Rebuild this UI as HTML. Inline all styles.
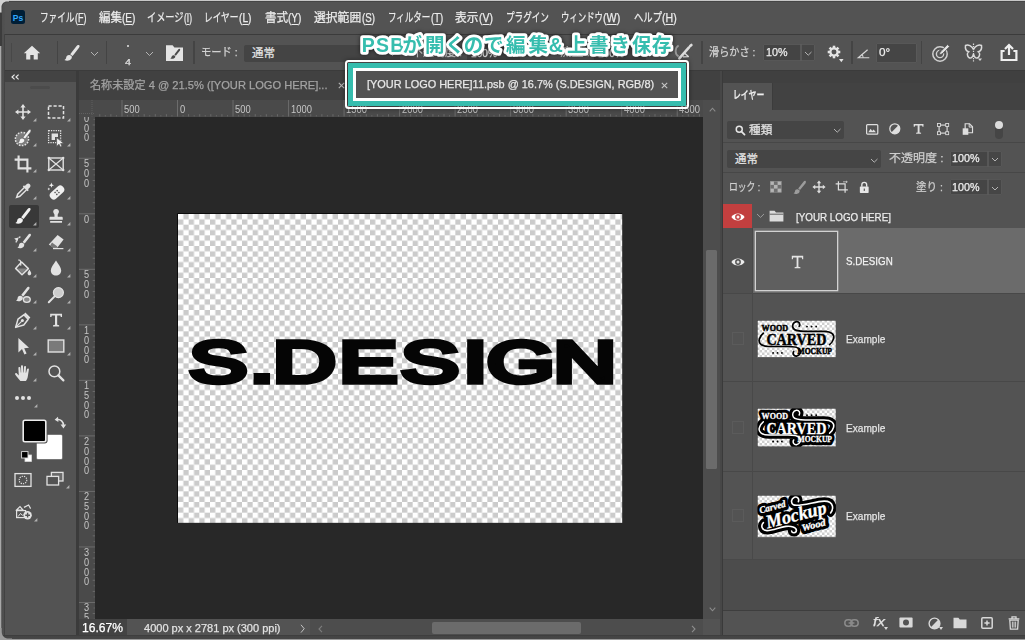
<!DOCTYPE html>
<html lang="ja"><head><meta charset="utf-8"><title>Photoshop</title><style>
html,body{margin:0;padding:0;background:#535353;}
body{width:1025px;height:640px;overflow:hidden;position:relative;font-family:"Liberation Sans","Noto Sans CJK JP",sans-serif;}
#app{position:absolute;left:0;top:0;width:1025px;height:640px;overflow:hidden;background:#535353;}
#app>div,#app>svg,#app>span{position:absolute;display:block;}
svg{overflow:visible;}
.t{white-space:nowrap;transform-origin:0 50%;letter-spacing:0;-webkit-text-stroke:0.25px currentColor;}
.t u{text-decoration-thickness:0.8px;text-underline-offset:1.5px;}
.rl{font-size:10.2px;line-height:10px;color:#c6c6c6;white-space:nowrap;transform-origin:0 0;transform:scaleX(0.92);}
.rl.v{writing-mode:vertical-rl;text-orientation:upright;width:9px;line-height:9px;letter-spacing:-1.25px;transform-origin:50% 0;transform:scaleX(0.9);}
</style></head><body><div id="app">
<span class="t" id="t4" style="left:39.50px;top:8.80px;font-size:12px;line-height:18px;color:#ececec;font-weight:400;transform:scaleX(0.7175);">ファイル</span>
<span class="t" id="t5" style="left:74.55px;top:8.80px;font-size:12px;line-height:18px;color:#ececec;font-weight:400;transform:scaleX(0.7462);">(<u>F</u>)</span>
<span class="t" id="t6" style="left:98.50px;top:8.80px;font-size:12px;line-height:18px;color:#ececec;font-weight:400;transform:scaleX(0.9556);">編集</span>
<span class="t" id="t7" style="left:122.05px;top:8.80px;font-size:12px;line-height:18px;color:#ececec;font-weight:400;transform:scaleX(0.8398);">(<u>E</u>)</span>
<span class="t" id="t8" style="left:147.00px;top:8.80px;font-size:12px;line-height:18px;color:#ececec;font-weight:400;transform:scaleX(0.7631);">イメージ</span>
<span class="t" id="t9" style="left:184.05px;top:8.80px;font-size:12px;line-height:18px;color:#ececec;font-weight:400;transform:scaleX(0.7008);">(<u>I</u>)</span>
<span class="t" id="t10" style="left:204.00px;top:8.80px;font-size:12px;line-height:18px;color:#ececec;font-weight:400;transform:scaleX(0.7231);">レイヤー</span>
<span class="t" id="t11" style="left:239.05px;top:8.80px;font-size:12px;line-height:18px;color:#ececec;font-weight:400;transform:scaleX(0.8477);">(<u>L</u>)</span>
<span class="t" id="t12" style="left:264.50px;top:8.80px;font-size:12px;line-height:18px;color:#ececec;font-weight:400;transform:scaleX(0.9660);">書式</span>
<span class="t" id="t13" style="left:288.30px;top:8.80px;font-size:12px;line-height:18px;color:#ececec;font-weight:400;transform:scaleX(0.8398);">(<u>Y</u>)</span>
<span class="t" id="t14" style="left:314.25px;top:8.80px;font-size:12px;line-height:18px;color:#ececec;font-weight:400;transform:scaleX(0.9830);">選択範囲</span>
<span class="t" id="t15" style="left:362.05px;top:8.80px;font-size:12px;line-height:18px;color:#ececec;font-weight:400;transform:scaleX(0.8086);">(<u>S</u>)</span>
<span class="t" id="t16" style="left:388.00px;top:8.80px;font-size:12px;line-height:18px;color:#ececec;font-weight:400;transform:scaleX(0.7061);">フィルター</span>
<span class="t" id="t17" style="left:430.80px;top:8.80px;font-size:12px;line-height:18px;color:#ececec;font-weight:400;transform:scaleX(0.7951);">(<u>T</u>)</span>
<span class="t" id="t18" style="left:455.00px;top:8.80px;font-size:12px;line-height:18px;color:#ececec;font-weight:400;transform:scaleX(0.9764);">表示</span>
<span class="t" id="t19" style="left:479.05px;top:8.80px;font-size:12px;line-height:18px;color:#ececec;font-weight:400;transform:scaleX(0.8710);">(<u>V</u>)</span>
<span class="t" id="t20" style="left:505.50px;top:8.80px;font-size:12px;line-height:18px;color:#ececec;font-weight:400;transform:scaleX(0.7156);">プラグイン</span>
<span class="t" id="t21" style="left:560.75px;top:8.80px;font-size:12px;line-height:18px;color:#ececec;font-weight:400;transform:scaleX(0.6990);">ウィンドウ</span>
<span class="t" id="t22" style="left:603.30px;top:8.80px;font-size:12px;line-height:18px;color:#ececec;font-weight:400;transform:scaleX(0.8899);">(<u>W</u>)</span>
<span class="t" id="t23" style="left:633.75px;top:8.80px;font-size:12px;line-height:18px;color:#ececec;font-weight:400;transform:scaleX(0.7761);">ヘルプ</span>
<span class="t" id="t24" style="left:662.30px;top:8.80px;font-size:12px;line-height:18px;color:#ececec;font-weight:400;transform:scaleX(0.8817);">(<u>H</u>)</span>
<svg style="left:10.50px;top:10.00px;" width="14" height="14" viewBox="0 0 14 14"><rect x="0" y="0" width="14" height="14" rx="2.5" fill="#001e36"/><text x="7" y="10.6" font-size="8.5" font-weight="700" fill="#31a8ff" text-anchor="middle" font-family='"Liberation Sans",sans-serif'>Ps</text></svg>
<div style="left:4.50px;top:33.50px;width:1020.50px;height:1.50px;background:#3b3b3b;"></div>
<div style="left:4.50px;top:69.50px;width:1020.50px;height:1.50px;background:#3b3b3b;"></div>
<div style="left:10.50px;top:43.00px;width:1.00px;height:19.00px;background:#484848;"></div>
<div style="left:56.90px;top:41.00px;width:1.20px;height:23.00px;background:#444444;"></div>
<div style="left:105.90px;top:41.00px;width:1.20px;height:23.00px;background:#444444;"></div>
<div style="left:193.40px;top:41.00px;width:1.20px;height:23.00px;background:#444444;"></div>
<div style="left:701.40px;top:41.00px;width:1.20px;height:23.00px;background:#444444;"></div>
<div style="left:851.40px;top:41.00px;width:1.20px;height:23.00px;background:#444444;"></div>
<div style="left:920.70px;top:41.00px;width:1.20px;height:23.00px;background:#444444;"></div>
<svg style="left:23.00px;top:45.00px;" width="18" height="16" viewBox="0 0 18 16"><path d="M9 0.8 L0.8 8.2 L3.2 8.2 L3.2 14.6 L7.3 14.6 L7.3 10 L10.7 10 L10.7 14.6 L14.8 14.6 L14.8 8.2 L17.2 8.2 Z" fill="#e4e4e4"/></svg>
<svg style="left:63.00px;top:44.00px;" width="18" height="18" viewBox="0 0 18 18"><path d="M16.2 1.2 C15.2 0.6 14.2 1.2 13.4 2.2 L7.2 10.2 L9.6 12 L15.8 4 C16.6 3 17 1.8 16.2 1.2 Z" fill="#e4e4e4"/><path d="M6.4 11 C4.6 10.8 3.4 12 3.2 13.6 C3.1 14.8 2.4 15.6 1.4 16 C3.6 17.2 7 16.8 8.4 14.8 C9.2 13.6 8.8 12.2 8.4 11.8 Z" fill="#e4e4e4"/></svg>
<svg style="left:89.50px;top:50.75px;" width="9" height="5.5" viewBox="0 0 9 5.5"><path d="M1 1 L4.50 4.50 L8.00 1" fill="none" stroke="#b4b4b4" stroke-width="1.0"/></svg>
<div style="left:127.00px;top:45.20px;width:2.00px;height:2.00px;background:#e4e4e4;border-radius:1px"></div>
<span class="t" id="t25" style="left:125.00px;top:54.50px;font-size:9.5px;line-height:14px;color:#e0e0e0;font-weight:400;transform:scaleX(1.1327);">4</span>
<svg style="left:144.50px;top:50.75px;" width="9" height="5.5" viewBox="0 0 9 5.5"><path d="M1 1 L4.50 4.50 L8.00 1" fill="none" stroke="#b4b4b4" stroke-width="1.0"/></svg>
<svg style="left:166.00px;top:43.50px;" width="17" height="18" viewBox="0 0 17 18"><path d="M0 1.2 L6.6 1.2 L8.4 3.4 L17 3.4 L17 17 L0 17 Z" fill="#e4e4e4"/><path d="M13.8 5 C13.2 4.6 12.6 5 12.2 5.6 L8.4 10.6 L9.8 11.8 L13.8 6.8 C14.2 6.2 14.4 5.4 13.8 5 Z M7.8 11.2 C6.6 11 5.8 11.8 5.6 12.8 C5.5 13.6 5 14.2 4.2 14.4 C5.8 15.2 8 15 9 13.6 C9.5 12.8 9.2 12 9 11.8 Z" fill="#4a4a4a"/></svg>
<span class="t" id="t26" style="left:201.00px;top:44.00px;font-size:11.5px;line-height:17px;color:#d2d2d2;font-weight:400;transform:scaleX(0.8926);">モード :</span>
<div style="left:243.75px;top:44.50px;width:156.25px;height:17.50px;background:#444444;border-radius:2px"></div>
<span class="t" id="t27" style="left:252.00px;top:44.50px;font-size:11.5px;line-height:17px;color:#e0e0e0;font-weight:400;transform:scaleX(1.0000);">通常</span>
<svg style="left:387.50px;top:50.75px;" width="9" height="5.5" viewBox="0 0 9 5.5"><path d="M1 1 L4.50 4.50 L8.00 1" fill="none" stroke="#b4b4b4" stroke-width="1.0"/></svg>
<span class="t" id="t28" style="left:412.00px;top:44.00px;font-size:11.5px;line-height:17px;color:#cfcfcf;font-weight:400;transform:scaleX(0.9544);">不透明度 :</span>
<div style="left:467.00px;top:44.50px;width:53.00px;height:17.50px;background:#444444;border-radius:2px"></div>
<span class="t" id="t29" style="left:471.00px;top:44.50px;font-size:11.5px;line-height:17px;color:#e0e0e0;font-weight:400;transform:scaleX(0.8837);">100%</span>
<span class="t" id="t30" style="left:560.00px;top:44.00px;font-size:11.5px;line-height:17px;color:#cfcfcf;font-weight:400;transform:scaleX(1.0207);">流量 :</span>
<div style="left:594.00px;top:44.50px;width:52.00px;height:17.50px;background:#444444;border-radius:2px"></div>
<span class="t" id="t31" style="left:598.00px;top:44.50px;font-size:11.5px;line-height:17px;color:#e0e0e0;font-weight:400;transform:scaleX(0.8837);">100%</span>
<svg style="left:672.00px;top:44.00px;" width="21" height="16" viewBox="0 0 21 16"><path d="M6.6 1.6 C2.6 4 2.6 10 6.6 12.6" fill="none" stroke="#9a9a9a" stroke-width="1.8"/><path d="M7.4 14.4 L17 3.4 M18.2 2 L19.4 1" fill="none" stroke="#dcdcdc" stroke-width="2.6" stroke-linecap="round"/><path d="M12.4 9 L16.4 12.6 L11 12.8" fill="none" stroke="#dcdcdc" stroke-width="1.3" stroke-linejoin="round"/></svg>
<span class="t" id="t32" style="left:708.75px;top:43.50px;font-size:11.5px;line-height:17px;color:#d2d2d2;font-weight:400;transform:scaleX(0.8828);">滑らかさ :</span>
<div style="left:762.50px;top:43.75px;width:38.00px;height:17.00px;background:#444444;border-radius:2px 0 0 2px;box-shadow:inset 0 0 0 0.8px #5e5e5e"></div>
<div style="left:800.50px;top:43.75px;width:14.50px;height:17.00px;background:#464646;border-radius:0 2px 2px 0;box-shadow:inset 0 0 0 0.8px #5e5e5e"></div>
<span class="t" id="t33" style="left:765.50px;top:43.80px;font-size:11.5px;line-height:17px;color:#eeeeee;font-weight:400;transform:scaleX(0.9335);">10%</span>
<svg style="left:803.75px;top:50.90px;" width="8.5" height="5.2" viewBox="0 0 8.5 5.2"><path d="M1 1 L4.25 4.20 L7.50 1" fill="none" stroke="#b4b4b4" stroke-width="1.0"/></svg>
<svg style="left:826.75px;top:45.00px;" width="14" height="14" viewBox="0 0 16 16"><g transform="translate(8,8)"><rect x="-1.45" y="-7.2" width="2.9" height="3.4" transform="rotate(0)" fill="#e4e4e4"/><rect x="-1.45" y="-7.2" width="2.9" height="3.4" transform="rotate(45)" fill="#e4e4e4"/><rect x="-1.45" y="-7.2" width="2.9" height="3.4" transform="rotate(90)" fill="#e4e4e4"/><rect x="-1.45" y="-7.2" width="2.9" height="3.4" transform="rotate(135)" fill="#e4e4e4"/><rect x="-1.45" y="-7.2" width="2.9" height="3.4" transform="rotate(180)" fill="#e4e4e4"/><rect x="-1.45" y="-7.2" width="2.9" height="3.4" transform="rotate(225)" fill="#e4e4e4"/><rect x="-1.45" y="-7.2" width="2.9" height="3.4" transform="rotate(270)" fill="#e4e4e4"/><rect x="-1.45" y="-7.2" width="2.9" height="3.4" transform="rotate(315)" fill="#e4e4e4"/><circle r="4.1" fill="none" stroke="#e4e4e4" stroke-width="2.5"/></g></svg>
<svg style="left:838.80px;top:59.20px;" width="4.6" height="3.2" viewBox="0 0 4.6 3.2"><path d="M0 0 L4.6 0 L2.3 3.2 Z" fill="#e4e4e4"/></svg>
<svg style="left:857.00px;top:47.50px;" width="13.6" height="11" viewBox="0 0 16 13"><path d="M14.5 11.5 L1.5 11.5 L12.5 2" fill="none" stroke="#d6d6d6" stroke-width="1.4"/><path d="M7.2 11.5 C7.2 9.6 6.6 8.4 5.6 7.6" fill="none" stroke="#d6d6d6" stroke-width="1.2"/></svg>
<div style="left:875.50px;top:42.50px;width:41.00px;height:20.00px;background:#454545;border-radius:2px;box-shadow:inset 0 0 0 0.8px #5e5e5e"></div>
<span class="t" id="t34" style="left:878.75px;top:43.80px;font-size:11.5px;line-height:17px;color:#eeeeee;font-weight:400;transform:scaleX(1.0227);">0°</span>
<svg style="left:930.50px;top:42.00px;" width="21" height="21" viewBox="0 0 21 21"><circle cx="9" cy="12" r="7.2" fill="none" stroke="#d0d0d0" stroke-width="1.5"/><circle cx="9" cy="12" r="3.6" fill="none" stroke="#d0d0d0" stroke-width="1.4"/><path d="M9 12 L11 9" stroke="#535353" stroke-width="5"/><path d="M8.2 12.8 L9.2 10.2 L16.4 2.6 L18.6 4.6 L11 12 Z" fill="#e4e4e4" stroke="#535353" stroke-width="0.8"/></svg>
<svg style="left:963.50px;top:43.00px;" width="19" height="19" viewBox="0 0 19 19"><path d="M9.5 6.5 C8 3 4 1 1.5 2.5 C1 5.5 2.5 8 4.5 8.8 C2.8 9.8 3 13.5 5.2 14.8 C7.4 15.8 9 13.5 9.5 11 M9.5 6.5 C11 3 15 1 17.5 2.5 C18 5.5 16.5 8 14.5 8.8 C16.2 9.8 16 13.5 13.8 14.8 C11.6 15.8 10 13.5 9.5 11" fill="none" stroke="#dadada" stroke-width="1.5"/><path d="M9.5 0.5 L9.5 18.5" stroke="#dadada" stroke-width="1.2" stroke-dasharray="1.4 1"/><path d="M14 15.6 L18 15.6 L16 18 Z" fill="#dadada"/></svg>
<svg style="left:1000.00px;top:42.50px;" width="18" height="19" viewBox="0 0 18 19"><path d="M4.6 8 L1.6 8 L1.6 17 L16.4 17 L16.4 8 L13.4 8" fill="none" stroke="#f0f0f0" stroke-width="2.2"/><path d="M9 12 L9 2.6 M5 6 L9 2 L13 6" fill="none" stroke="#f0f0f0" stroke-width="2.2"/></svg>
<div style="left:4.50px;top:70.50px;width:71.50px;height:11.00px;background:#434343;"></div>
<div style="left:76.00px;top:70.50px;width:3.00px;height:569.50px;background:#3b3b3b;"></div>
<svg style="left:10.50px;top:73.50px;" width="9" height="6" viewBox="0 0 9 6"><path d="M3.6 0.6 L1 3 L3.6 5.4 M7.6 0.6 L5 3 L7.6 5.4" fill="none" stroke="#e8e8e8" stroke-width="1.2"/></svg>
<div style="left:30.00px;top:85.50px;width:20.00px;height:3.50px;background:#4b4b4b;border-radius:1.5px"></div>
<div style="left:9.00px;top:205.00px;width:30.00px;height:23.00px;background:#383838;border-radius:2px"></div>
<svg style="left:13.50px;top:103.00px;" width="18.0" height="18.0" viewBox="0 0 18 18"><path d="M9 1 L11.6 4.4 L9.8 4.4 L9.8 8.2 L13.6 8.2 L13.6 6.4 L17 9 L13.6 11.6 L13.6 9.8 L9.8 9.8 L9.8 13.6 L11.6 13.6 L9 17 L6.4 13.6 L8.2 13.6 L8.2 9.8 L4.4 9.8 L4.4 11.6 L1 9 L4.4 6.4 L4.4 8.2 L8.2 8.2 L8.2 4.4 L6.4 4.4 Z" fill="#e2e2e2"/></svg><svg style="left:33.00px;top:117.50px;" width="3.4" height="3.4" viewBox="0 0 3.4 3.4"><path d="M3.4 0 L3.4 3.4 L0 3.4 Z" fill="#b0b0b0"/></svg>
<svg style="left:47.00px;top:103.00px;" width="18.0" height="18.0" viewBox="0 0 18 18"><rect x="1.5" y="3" width="15" height="12" fill="none" stroke="#e2e2e2" stroke-width="1.5" stroke-dasharray="3.2 1.8"/></svg><svg style="left:66.50px;top:117.50px;" width="3.4" height="3.4" viewBox="0 0 3.4 3.4"><path d="M3.4 0 L3.4 3.4 L0 3.4 Z" fill="#b0b0b0"/></svg>
<svg style="left:13.50px;top:128.50px;" width="18.0" height="18.0" viewBox="0 0 18 18"><circle cx="8" cy="10" r="6.6" fill="#7c7c7c" stroke="#e2e2e2" stroke-width="1.5" stroke-dasharray="1.7 1.25"/><path d="M16.6 0.8 C15.7 0.2 14.8 0.8 14.1 1.7 L9 8.4 L11.1 10 L16.2 3.4 C16.9 2.5 17.3 1.3 16.6 0.8 Z M8.3 9.2 C6.6 9 5.5 10.1 5.4 11.6 C5.3 12.7 4.6 13.5 3.7 13.9 C5.8 15 8.9 14.7 10.2 12.8 C11 11.7 10.6 10.4 10.2 10 Z" fill="#f2f2f2" stroke="#535353" stroke-width="0.5"/></svg><svg style="left:33.00px;top:143.00px;" width="3.4" height="3.4" viewBox="0 0 3.4 3.4"><path d="M3.4 0 L3.4 3.4 L0 3.4 Z" fill="#b0b0b0"/></svg>
<svg style="left:47.00px;top:128.50px;" width="18.0" height="18.0" viewBox="0 0 18 18"><rect x="1.6" y="1.6" width="12" height="12" fill="none" stroke="#e2e2e2" stroke-width="1.3" stroke-dasharray="1.3 1.05"/><path d="M4.6 4.6 L11 4.6 L11 8 L8 8 L8 11 L4.6 11 Z" fill="#e2e2e2"/><path d="M9.6 8.6 L9.6 17.4 L12 15.2 L13.4 18 L15 17.2 L13.6 14.5 L16.6 14.2 Z" fill="#f2f2f2" stroke="#535353" stroke-width="0.7"/></svg><svg style="left:66.50px;top:143.00px;" width="3.4" height="3.4" viewBox="0 0 3.4 3.4"><path d="M3.4 0 L3.4 3.4 L0 3.4 Z" fill="#b0b0b0"/></svg>
<svg style="left:13.50px;top:154.60px;" width="18.0" height="18.0" viewBox="0 0 18 18"><path d="M4.6 0.6 L4.6 13.4 L17.4 13.4 M0.6 4.6 L13.4 4.6 L13.4 17.4" fill="none" stroke="#e2e2e2" stroke-width="2.1"/></svg><svg style="left:33.00px;top:169.10px;" width="3.4" height="3.4" viewBox="0 0 3.4 3.4"><path d="M3.4 0 L3.4 3.4 L0 3.4 Z" fill="#b0b0b0"/></svg>
<svg style="left:47.00px;top:154.60px;" width="18.0" height="18.0" viewBox="0 0 18 18"><rect x="1.8" y="3" width="14.4" height="12" fill="none" stroke="#e2e2e2" stroke-width="1.4"/><path d="M1.8 3 L16.2 15 M16.2 3 L1.8 15" stroke="#e2e2e2" stroke-width="1.2"/><circle cx="1.8" cy="3" r="1.2" fill="#e2e2e2"/><circle cx="16.2" cy="3" r="1.2" fill="#e2e2e2"/><circle cx="1.8" cy="15" r="1.2" fill="#e2e2e2"/><circle cx="16.2" cy="15" r="1.2" fill="#e2e2e2"/></svg><svg style="left:66.50px;top:169.10px;" width="3.4" height="3.4" viewBox="0 0 3.4 3.4"><path d="M3.4 0 L3.4 3.4 L0 3.4 Z" fill="#b0b0b0"/></svg>
<svg style="left:13.50px;top:181.60px;" width="18.0" height="18.0" viewBox="0 0 18 18"><path d="M15.8 2.2 C14.8 1.2 13.4 1.4 12.6 2.2 L10.8 4 L10 3.2 L8.8 4.4 L9.6 5.2 L3 11.8 L2 15 L1.4 16.6 L3 16 L6.2 15 L12.8 8.4 L13.6 9.2 L14.8 8 L14 7.2 L15.8 5.4 C16.6 4.6 16.8 3.2 15.8 2.2 Z M10.6 6.2 L11.8 7.4 L5.6 13.6 L3.8 14.2 L4.4 12.4 Z" fill="#e2e2e2" fill-rule="evenodd"/></svg><svg style="left:33.00px;top:196.10px;" width="3.4" height="3.4" viewBox="0 0 3.4 3.4"><path d="M3.4 0 L3.4 3.4 L0 3.4 Z" fill="#b0b0b0"/></svg>
<svg style="left:47.00px;top:181.60px;" width="18.0" height="18.0" viewBox="0 0 18 18"><g transform="rotate(-42 10 10.5)"><rect x="1.6" y="6.6" width="16.8" height="7.8" rx="3.9" fill="#f0f0f0"/><circle cx="8.6" cy="9.2" r="0.8" fill="#535353"/><circle cx="11.4" cy="9.2" r="0.8" fill="#535353"/><circle cx="8.6" cy="11.8" r="0.8" fill="#535353"/><circle cx="11.4" cy="11.8" r="0.8" fill="#535353"/></g><path d="M4.4 0.6 L5.1 2.5 L7 3.2 L5.1 3.9 L4.4 5.8 L3.7 3.9 L1.8 3.2 L3.7 2.5 Z M1.8 5.6 L2.2 6.6 L3.2 7 L2.2 7.4 L1.8 8.4 L1.4 7.4 L0.4 7 L1.4 6.6Z" fill="#f0f0f0"/></svg><svg style="left:66.50px;top:196.10px;" width="3.4" height="3.4" viewBox="0 0 3.4 3.4"><path d="M3.4 0 L3.4 3.4 L0 3.4 Z" fill="#b0b0b0"/></svg>
<svg style="left:13.50px;top:207.00px;" width="18.0" height="18.0" viewBox="0 0 18 18"><path d="M16.2 1.2 C15.2 0.6 14.2 1.2 13.4 2.2 L7.2 10.2 L9.6 12 L15.8 4 C16.6 3 17 1.8 16.2 1.2 Z M6.4 11 C4.6 10.8 3.4 12 3.2 13.6 C3.1 14.8 2.4 15.6 1.4 16 C3.6 17.2 7 16.8 8.4 14.8 C9.2 13.6 8.8 12.2 8.4 11.8 Z" fill="#f0f0f0"/></svg><svg style="left:33.00px;top:221.50px;" width="3.4" height="3.4" viewBox="0 0 3.4 3.4"><path d="M3.4 0 L3.4 3.4 L0 3.4 Z" fill="#b0b0b0"/></svg>
<svg style="left:47.90px;top:207.90px;" width="16.2" height="16.2" viewBox="0 0 18 18"><path d="M9 1 C11 1 12.2 2.4 12.2 4 C12.2 5.4 11 6.4 10.8 7.6 L10.8 9.6 L15 9.6 C16 9.6 16.4 10.2 16.4 11 L16.4 13 L1.6 13 L1.6 11 C1.6 10.2 2 9.6 3 9.6 L7.2 9.6 L7.2 7.6 C7 6.4 5.8 5.4 5.8 4 C5.8 2.4 7 1 9 1 Z M2.4 14.4 L15.6 14.4 L15.6 16.4 L2.4 16.4 Z" fill="#e2e2e2"/></svg><svg style="left:66.50px;top:221.50px;" width="3.4" height="3.4" viewBox="0 0 3.4 3.4"><path d="M3.4 0 L3.4 3.4 L0 3.4 Z" fill="#b0b0b0"/></svg>
<svg style="left:13.50px;top:233.00px;" width="18.0" height="18.0" viewBox="0 0 18 18"><path d="M16.6 1 C15.7 0.4 14.8 1 14.1 1.9 L8.6 9 L10.7 10.6 L16.2 3.6 C16.9 2.7 17.3 1.5 16.6 1 Z M7.9 9.8 C6.2 9.6 5.1 10.7 5 12.2 C4.9 13.3 4.2 14.1 3.3 14.5 C5.4 15.6 8.5 15.3 9.8 13.4 C10.6 12.3 10.2 11 9.8 10.6 Z" fill="#e2e2e2"/><path d="M2.2 9.4 C2.2 6.2 4.4 4 7.4 3.8" fill="none" stroke="#e2e2e2" stroke-width="1.3" stroke-dasharray="1.8 1"/><path d="M0.2 5.6 L4.6 4.6 L3.4 8.6 Z" fill="#e2e2e2"/></svg><svg style="left:33.00px;top:247.50px;" width="3.4" height="3.4" viewBox="0 0 3.4 3.4"><path d="M3.4 0 L3.4 3.4 L0 3.4 Z" fill="#b0b0b0"/></svg>
<svg style="left:47.00px;top:233.00px;" width="18.0" height="18.0" viewBox="0 0 18 18"><path d="M10.6 2 L16.6 6.4 L10.4 14.6 L6 14.6 L1.8 11.4 Z" fill="#e2e2e2"/><path d="M5 9.4 L10.4 13.4 L9.6 14.6 L6 14.6 L3.2 12.4 Z" fill="#535353" opacity="0.75"/><path d="M6 15.6 L16.4 15.6" stroke="#e2e2e2" stroke-width="1.2"/></svg><svg style="left:66.50px;top:247.50px;" width="3.4" height="3.4" viewBox="0 0 3.4 3.4"><path d="M3.4 0 L3.4 3.4 L0 3.4 Z" fill="#b0b0b0"/></svg>
<svg style="left:13.50px;top:259.00px;" width="18.0" height="18.0" viewBox="0 0 18 18"><path d="M7.6 3 L14.4 9.6 L8 15.8 L1.6 9.4 Z" fill="none" stroke="#e2e2e2" stroke-width="1.5" stroke-linejoin="round"/><path d="M3 9.4 L13 9.4 L8 14.2 Z" fill="#e2e2e2" opacity="0.35"/><path d="M4.2 1.2 C5.4 0.6 6.4 1.4 6.6 2.6 L6.8 6.6" fill="none" stroke="#e2e2e2" stroke-width="1.2"/><path d="M15.4 10.6 C16.4 12.2 17.2 13.4 17.2 14.4 C17.2 15.4 16.4 16.2 15.4 16.2 C14.4 16.2 13.6 15.4 13.6 14.4 C13.6 13.4 14.4 12.2 15.4 10.6 Z" fill="#e2e2e2"/></svg><svg style="left:33.00px;top:273.50px;" width="3.4" height="3.4" viewBox="0 0 3.4 3.4"><path d="M3.4 0 L3.4 3.4 L0 3.4 Z" fill="#b0b0b0"/></svg>
<svg style="left:47.00px;top:259.00px;" width="18.0" height="18.0" viewBox="0 0 18 18"><path d="M9 1.4 C11.4 5 14.2 8.4 14.2 11.4 C14.2 14.4 11.9 16.6 9 16.6 C6.1 16.6 3.8 14.4 3.8 11.4 C3.8 8.4 6.6 5 9 1.4 Z" fill="#e2e2e2"/></svg><svg style="left:66.50px;top:273.50px;" width="3.4" height="3.4" viewBox="0 0 3.4 3.4"><path d="M3.4 0 L3.4 3.4 L0 3.4 Z" fill="#b0b0b0"/></svg>
<svg style="left:13.50px;top:285.50px;" width="18.0" height="18.0" viewBox="0 0 18 18"><path d="M15.2 1 C14.3 0.4 13.4 1 12.7 1.9 L7.2 9 L9.3 10.6 L14.8 3.6 C15.5 2.7 15.9 1.5 15.2 1 Z M6.5 9.8 C4.8 9.6 3.7 10.7 3.6 12.2 C3.5 13.3 2.8 14.1 1.9 14.5 C4 15.6 7.1 15.3 8.4 13.4 C9.2 12.3 8.8 11 8.4 10.6 Z" fill="#e2e2e2"/><ellipse cx="12.8" cy="13.6" rx="3.4" ry="2.8" fill="#8a8a8a" stroke="#e2e2e2" stroke-width="1.4"/></svg><svg style="left:33.00px;top:300.00px;" width="3.4" height="3.4" viewBox="0 0 3.4 3.4"><path d="M3.4 0 L3.4 3.4 L0 3.4 Z" fill="#b0b0b0"/></svg>
<svg style="left:47.00px;top:285.50px;" width="18.0" height="18.0" viewBox="0 0 18 18"><circle cx="11.4" cy="6.6" r="5" fill="#e2e2e2" opacity="0.85"/><circle cx="11.4" cy="6.6" r="5" fill="none" stroke="#e2e2e2" stroke-width="1.2"/><path d="M7.6 10.4 L1.8 16.2" stroke="#e2e2e2" stroke-width="2" stroke-linecap="round"/></svg><svg style="left:66.50px;top:300.00px;" width="3.4" height="3.4" viewBox="0 0 3.4 3.4"><path d="M3.4 0 L3.4 3.4 L0 3.4 Z" fill="#b0b0b0"/></svg>
<svg style="left:13.50px;top:311.00px;" width="18.0" height="18.0" viewBox="0 0 18 18"><path d="M1.6 16.4 L4 8.2 L9.8 3.8 L14.2 8.2 L9.8 14 Z" fill="none" stroke="#e2e2e2" stroke-width="1.5" stroke-linejoin="round"/><path d="M2 16 L7.6 10.4" stroke="#e2e2e2" stroke-width="1.1"/><circle cx="8.4" cy="9.6" r="1.5" fill="#e2e2e2"/><path d="M11.4 1.6 L16.4 6.6 L14.8 8.2 L9.8 3.2 Z" fill="#e2e2e2"/></svg><svg style="left:33.00px;top:325.50px;" width="3.4" height="3.4" viewBox="0 0 3.4 3.4"><path d="M3.4 0 L3.4 3.4 L0 3.4 Z" fill="#b0b0b0"/></svg>
<svg style="left:47.90px;top:311.90px;" width="16.2" height="16.2" viewBox="0 0 18 18"><path d="M2.4 2 L15.6 2 L15.6 5.6 L14.2 5.6 L13.8 3.8 L10.2 3.8 L10.2 14.2 L12.4 14.6 L12.4 16 L5.6 16 L5.6 14.6 L7.8 14.2 L7.8 3.8 L4.2 3.8 L3.8 5.6 L2.4 5.6 Z" fill="#e2e2e2"/></svg><svg style="left:66.50px;top:325.50px;" width="3.4" height="3.4" viewBox="0 0 3.4 3.4"><path d="M3.4 0 L3.4 3.4 L0 3.4 Z" fill="#b0b0b0"/></svg>
<svg style="left:13.50px;top:337.00px;" width="18.0" height="18.0" viewBox="0 0 18 18"><path d="M4.4 1 L4.4 15.4 L8 12 L10.4 17.4 L12.6 16.4 L10.2 11.2 L15 10.8 Z" fill="#e2e2e2"/></svg><svg style="left:33.00px;top:351.50px;" width="3.4" height="3.4" viewBox="0 0 3.4 3.4"><path d="M3.4 0 L3.4 3.4 L0 3.4 Z" fill="#b0b0b0"/></svg>
<svg style="left:47.00px;top:337.00px;" width="18.0" height="18.0" viewBox="0 0 18 18"><rect x="1.2" y="3" width="15.6" height="12" fill="#7a7a7a" stroke="#e2e2e2" stroke-width="1.4"/></svg><svg style="left:66.50px;top:351.50px;" width="3.4" height="3.4" viewBox="0 0 3.4 3.4"><path d="M3.4 0 L3.4 3.4 L0 3.4 Z" fill="#b0b0b0"/></svg>
<svg style="left:13.50px;top:363.50px;" width="18.0" height="18.0" viewBox="0 0 18 18"><path d="M6.4 17 C4.4 14.8 2.4 12.4 1.2 10.6 C0.5 9.5 1.9 8.4 2.9 9.4 L4.8 11.4 L4.4 4.2 C4.3 2.8 6.3 2.7 6.4 4.1 L6.8 8.4 L7.2 8.4 L7 2.4 C7 1 9 1 9 2.4 L9.2 8.4 L9.6 8.4 L10 3 C10.1 1.6 12.1 1.7 12 3.1 L11.7 8.8 L12.1 8.8 L13 5.2 C13.3 3.9 15.2 4.3 14.9 5.6 L13.8 12.4 C13.5 14.4 12.8 15.8 11.8 17 Z" fill="#e2e2e2"/></svg><svg style="left:33.00px;top:378.00px;" width="3.4" height="3.4" viewBox="0 0 3.4 3.4"><path d="M3.4 0 L3.4 3.4 L0 3.4 Z" fill="#b0b0b0"/></svg>
<svg style="left:47.00px;top:363.50px;" width="18.0" height="18.0" viewBox="0 0 18 18"><circle cx="7.4" cy="7.4" r="5.4" fill="none" stroke="#e2e2e2" stroke-width="1.5"/><path d="M11.4 11.4 L16.4 16.4" stroke="#e2e2e2" stroke-width="2.2" stroke-linecap="round"/></svg>
<svg style="left:14.00px;top:389.00px;" width="18.0" height="18.0" viewBox="0 0 18 18"><circle cx="3" cy="9" r="2" fill="#e2e2e2"/><circle cx="9" cy="9" r="2" fill="#e2e2e2"/><circle cx="15" cy="9" r="2" fill="#e2e2e2"/></svg><svg style="left:33.50px;top:403.50px;" width="3.4" height="3.4" viewBox="0 0 3.4 3.4"><path d="M3.4 0 L3.4 3.4 L0 3.4 Z" fill="#b0b0b0"/></svg>
<div style="left:36.50px;top:434.50px;width:25.00px;height:24.50px;background:#ffffff;border-radius:1px;box-shadow:0 0 0 0.6px #9a9a9a"></div>
<div style="left:23.60px;top:420.60px;width:21.30px;height:20.70px;background:#000000;border-radius:1px;box-shadow:0 0 0 1.6px #ececec, 0 0 0 2.6px #535353"></div>
<svg style="left:54.00px;top:416.00px;" width="13" height="13" viewBox="0 0 13 13"><path d="M3 3.6 C6.6 3 9.6 5.4 9.4 9.6" fill="none" stroke="#e0e0e0" stroke-width="1.6"/><path d="M0.6 3.8 L4 0.8 L4.4 6 Z M6.6 8.6 L12.2 8.6 L9.4 12.6 Z" fill="#e0e0e0"/></svg>
<svg style="left:20.50px;top:451.00px;" width="11" height="11" viewBox="0 0 11 11"><rect x="4" y="4" width="6.4" height="6.4" fill="#fff" stroke="#ddd" stroke-width="0.8"/><rect x="0.6" y="0.6" width="6.4" height="6.4" fill="#000" stroke="#ddd" stroke-width="0.9"/></svg>
<svg style="left:14.00px;top:470.50px;" width="18.0" height="18.0" viewBox="0 0 18 18"><rect x="1" y="2.6" width="16" height="12.8" fill="none" stroke="#e2e2e2" stroke-width="1.3"/><circle cx="9" cy="9" r="3.8" fill="none" stroke="#e2e2e2" stroke-width="1.1" stroke-dasharray="1.3 1"/></svg>
<svg style="left:46.00px;top:470.00px;" width="18.0" height="18.0" viewBox="0 0 18 18"><rect x="5.4" y="2.4" width="11.6" height="8.6" fill="#6a6a6a" stroke="#e2e2e2" stroke-width="1.3"/><rect x="1" y="6.4" width="11.6" height="8.6" fill="#535353" stroke="#e2e2e2" stroke-width="1.3"/></svg><svg style="left:65.50px;top:484.50px;" width="3.4" height="3.4" viewBox="0 0 3.4 3.4"><path d="M3.4 0 L3.4 3.4 L0 3.4 Z" fill="#b0b0b0"/></svg>
<svg style="left:14.50px;top:503.00px;" width="18.0" height="18.0" viewBox="0 0 18 18"><path d="M1.6 7 L5 3.6 L8 7 Z" fill="none" stroke="#e2e2e2" stroke-width="1.2"/><rect x="1.6" y="7.6" width="9" height="7" fill="none" stroke="#e2e2e2" stroke-width="1.2"/><path d="M3 13.6 L5.6 10.4 L7.4 12.4 L8.4 11.4" fill="none" stroke="#e2e2e2" stroke-width="1"/><path d="M9 4.4 L13.6 2 L15.6 5.6" fill="none" stroke="#e2e2e2" stroke-width="1.2"/><circle cx="12.6" cy="12.2" r="4.2" fill="#e2e2e2"/><path d="M12.6 9.8 L12.6 14.6 M10.2 12.2 L15 12.2" stroke="#535353" stroke-width="1.4"/></svg><svg style="left:34.00px;top:517.50px;" width="3.4" height="3.4" viewBox="0 0 3.4 3.4"><path d="M3.4 0 L3.4 3.4 L0 3.4 Z" fill="#b0b0b0"/></svg>
<div style="left:79.00px;top:70.50px;width:640.50px;height:29.50px;background:#414141;"></div>
<span class="t" id="t1" style="left:90.00px;top:76.50px;font-size:11.5px;line-height:17px;color:#a3a3a3;font-weight:400;transform:scaleX(0.9672);">名称未設定 4 @ 21.5% ([YOUR LOGO HERE]...</span>
<svg style="left:337.50px;top:82.00px;" width="7" height="7" viewBox="0 0 7 7"><path d="M0.8 0.8 L6.2 6.2 M6.2 0.8 L0.8 6.2" stroke="#b4b4b4" stroke-width="1.1"/></svg>
<div style="left:79.00px;top:100.00px;width:624.25px;height:519.00px;background:#282828;"></div>
<div style="left:79.00px;top:100.00px;width:624.25px;height:16.50px;background:#4a4a4a;"></div>
<div style="left:79.00px;top:100.00px;width:16.00px;height:519.00px;background:#4a4a4a;"></div>
<svg style="left:0;top:0" width="720" height="640" viewBox="0 0 720 640"><path d="M99.77 114.2 V116.5" stroke="#6e6e6e" stroke-width="0.9"/><path d="M105.32 115 V116.5" stroke="#666" stroke-width="0.9"/><path d="M110.87 114.2 V116.5" stroke="#6e6e6e" stroke-width="0.9"/><path d="M116.42 115 V116.5" stroke="#666" stroke-width="0.9"/><path d="M121.97 100 V116.5" stroke="#6c6c6c" stroke-width="1"/><path d="M127.53 115 V116.5" stroke="#666" stroke-width="0.9"/><path d="M133.08 114.2 V116.5" stroke="#6e6e6e" stroke-width="0.9"/><path d="M138.63 115 V116.5" stroke="#666" stroke-width="0.9"/><path d="M144.19 114.2 V116.5" stroke="#6e6e6e" stroke-width="0.9"/><path d="M149.74 115 V116.5" stroke="#666" stroke-width="0.9"/><path d="M155.29 114.2 V116.5" stroke="#6e6e6e" stroke-width="0.9"/><path d="M160.84 115 V116.5" stroke="#666" stroke-width="0.9"/><path d="M166.40 114.2 V116.5" stroke="#6e6e6e" stroke-width="0.9"/><path d="M171.95 115 V116.5" stroke="#666" stroke-width="0.9"/><path d="M177.50 100 V116.5" stroke="#6c6c6c" stroke-width="1"/><path d="M183.05 115 V116.5" stroke="#666" stroke-width="0.9"/><path d="M188.60 114.2 V116.5" stroke="#6e6e6e" stroke-width="0.9"/><path d="M194.16 115 V116.5" stroke="#666" stroke-width="0.9"/><path d="M199.71 114.2 V116.5" stroke="#6e6e6e" stroke-width="0.9"/><path d="M205.26 115 V116.5" stroke="#666" stroke-width="0.9"/><path d="M210.81 114.2 V116.5" stroke="#6e6e6e" stroke-width="0.9"/><path d="M216.37 115 V116.5" stroke="#666" stroke-width="0.9"/><path d="M221.92 114.2 V116.5" stroke="#6e6e6e" stroke-width="0.9"/><path d="M227.47 115 V116.5" stroke="#666" stroke-width="0.9"/><path d="M233.03 100 V116.5" stroke="#6c6c6c" stroke-width="1"/><path d="M238.58 115 V116.5" stroke="#666" stroke-width="0.9"/><path d="M244.13 114.2 V116.5" stroke="#6e6e6e" stroke-width="0.9"/><path d="M249.68 115 V116.5" stroke="#666" stroke-width="0.9"/><path d="M255.24 114.2 V116.5" stroke="#6e6e6e" stroke-width="0.9"/><path d="M260.79 115 V116.5" stroke="#666" stroke-width="0.9"/><path d="M266.34 114.2 V116.5" stroke="#6e6e6e" stroke-width="0.9"/><path d="M271.89 115 V116.5" stroke="#666" stroke-width="0.9"/><path d="M277.44 114.2 V116.5" stroke="#6e6e6e" stroke-width="0.9"/><path d="M283.00 115 V116.5" stroke="#666" stroke-width="0.9"/><path d="M288.55 100 V116.5" stroke="#6c6c6c" stroke-width="1"/><path d="M294.10 115 V116.5" stroke="#666" stroke-width="0.9"/><path d="M299.65 114.2 V116.5" stroke="#6e6e6e" stroke-width="0.9"/><path d="M305.21 115 V116.5" stroke="#666" stroke-width="0.9"/><path d="M310.76 114.2 V116.5" stroke="#6e6e6e" stroke-width="0.9"/><path d="M316.31 115 V116.5" stroke="#666" stroke-width="0.9"/><path d="M321.87 114.2 V116.5" stroke="#6e6e6e" stroke-width="0.9"/><path d="M327.42 115 V116.5" stroke="#666" stroke-width="0.9"/><path d="M332.97 114.2 V116.5" stroke="#6e6e6e" stroke-width="0.9"/><path d="M338.52 115 V116.5" stroke="#666" stroke-width="0.9"/><path d="M344.07 100 V116.5" stroke="#6c6c6c" stroke-width="1"/><path d="M349.63 115 V116.5" stroke="#666" stroke-width="0.9"/><path d="M355.18 114.2 V116.5" stroke="#6e6e6e" stroke-width="0.9"/><path d="M360.73 115 V116.5" stroke="#666" stroke-width="0.9"/><path d="M366.28 114.2 V116.5" stroke="#6e6e6e" stroke-width="0.9"/><path d="M371.84 115 V116.5" stroke="#666" stroke-width="0.9"/><path d="M377.39 114.2 V116.5" stroke="#6e6e6e" stroke-width="0.9"/><path d="M382.94 115 V116.5" stroke="#666" stroke-width="0.9"/><path d="M388.50 114.2 V116.5" stroke="#6e6e6e" stroke-width="0.9"/><path d="M394.05 115 V116.5" stroke="#666" stroke-width="0.9"/><path d="M399.60 100 V116.5" stroke="#6c6c6c" stroke-width="1"/><path d="M405.15 115 V116.5" stroke="#666" stroke-width="0.9"/><path d="M410.70 114.2 V116.5" stroke="#6e6e6e" stroke-width="0.9"/><path d="M416.26 115 V116.5" stroke="#666" stroke-width="0.9"/><path d="M421.81 114.2 V116.5" stroke="#6e6e6e" stroke-width="0.9"/><path d="M427.36 115 V116.5" stroke="#666" stroke-width="0.9"/><path d="M432.91 114.2 V116.5" stroke="#6e6e6e" stroke-width="0.9"/><path d="M438.47 115 V116.5" stroke="#666" stroke-width="0.9"/><path d="M444.02 114.2 V116.5" stroke="#6e6e6e" stroke-width="0.9"/><path d="M449.57 115 V116.5" stroke="#666" stroke-width="0.9"/><path d="M455.12 100 V116.5" stroke="#6c6c6c" stroke-width="1"/><path d="M460.68 115 V116.5" stroke="#666" stroke-width="0.9"/><path d="M466.23 114.2 V116.5" stroke="#6e6e6e" stroke-width="0.9"/><path d="M471.78 115 V116.5" stroke="#666" stroke-width="0.9"/><path d="M477.33 114.2 V116.5" stroke="#6e6e6e" stroke-width="0.9"/><path d="M482.89 115 V116.5" stroke="#666" stroke-width="0.9"/><path d="M488.44 114.2 V116.5" stroke="#6e6e6e" stroke-width="0.9"/><path d="M493.99 115 V116.5" stroke="#666" stroke-width="0.9"/><path d="M499.55 114.2 V116.5" stroke="#6e6e6e" stroke-width="0.9"/><path d="M505.10 115 V116.5" stroke="#666" stroke-width="0.9"/><path d="M510.65 100 V116.5" stroke="#6c6c6c" stroke-width="1"/><path d="M516.20 115 V116.5" stroke="#666" stroke-width="0.9"/><path d="M521.75 114.2 V116.5" stroke="#6e6e6e" stroke-width="0.9"/><path d="M527.31 115 V116.5" stroke="#666" stroke-width="0.9"/><path d="M532.86 114.2 V116.5" stroke="#6e6e6e" stroke-width="0.9"/><path d="M538.41 115 V116.5" stroke="#666" stroke-width="0.9"/><path d="M543.96 114.2 V116.5" stroke="#6e6e6e" stroke-width="0.9"/><path d="M549.52 115 V116.5" stroke="#666" stroke-width="0.9"/><path d="M555.07 114.2 V116.5" stroke="#6e6e6e" stroke-width="0.9"/><path d="M560.62 115 V116.5" stroke="#666" stroke-width="0.9"/><path d="M566.17 100 V116.5" stroke="#6c6c6c" stroke-width="1"/><path d="M571.73 115 V116.5" stroke="#666" stroke-width="0.9"/><path d="M577.28 114.2 V116.5" stroke="#6e6e6e" stroke-width="0.9"/><path d="M582.83 115 V116.5" stroke="#666" stroke-width="0.9"/><path d="M588.38 114.2 V116.5" stroke="#6e6e6e" stroke-width="0.9"/><path d="M593.94 115 V116.5" stroke="#666" stroke-width="0.9"/><path d="M599.49 114.2 V116.5" stroke="#6e6e6e" stroke-width="0.9"/><path d="M605.04 115 V116.5" stroke="#666" stroke-width="0.9"/><path d="M610.60 114.2 V116.5" stroke="#6e6e6e" stroke-width="0.9"/><path d="M616.15 115 V116.5" stroke="#666" stroke-width="0.9"/><path d="M621.70 100 V116.5" stroke="#6c6c6c" stroke-width="1"/><path d="M627.25 115 V116.5" stroke="#666" stroke-width="0.9"/><path d="M632.81 114.2 V116.5" stroke="#6e6e6e" stroke-width="0.9"/><path d="M638.36 115 V116.5" stroke="#666" stroke-width="0.9"/><path d="M643.91 114.2 V116.5" stroke="#6e6e6e" stroke-width="0.9"/><path d="M649.46 115 V116.5" stroke="#666" stroke-width="0.9"/><path d="M655.01 114.2 V116.5" stroke="#6e6e6e" stroke-width="0.9"/><path d="M660.57 115 V116.5" stroke="#666" stroke-width="0.9"/><path d="M666.12 114.2 V116.5" stroke="#6e6e6e" stroke-width="0.9"/><path d="M671.67 115 V116.5" stroke="#666" stroke-width="0.9"/><path d="M677.22 100 V116.5" stroke="#6c6c6c" stroke-width="1"/><path d="M682.78 115 V116.5" stroke="#666" stroke-width="0.9"/><path d="M688.33 114.2 V116.5" stroke="#6e6e6e" stroke-width="0.9"/><path d="M693.88 115 V116.5" stroke="#666" stroke-width="0.9"/><path d="M699.43 114.2 V116.5" stroke="#6e6e6e" stroke-width="0.9"/><path d="M93.5 119.41 H95" stroke="#666" stroke-width="0.9"/><path d="M92.7 124.96 H95" stroke="#6e6e6e" stroke-width="0.9"/><path d="M93.5 130.51 H95" stroke="#666" stroke-width="0.9"/><path d="M92.7 136.06 H95" stroke="#6e6e6e" stroke-width="0.9"/><path d="M93.5 141.62 H95" stroke="#666" stroke-width="0.9"/><path d="M92.7 147.17 H95" stroke="#6e6e6e" stroke-width="0.9"/><path d="M93.5 152.72 H95" stroke="#666" stroke-width="0.9"/><path d="M79 158.28 H95" stroke="#6c6c6c" stroke-width="1"/><path d="M93.5 163.83 H95" stroke="#666" stroke-width="0.9"/><path d="M92.7 169.38 H95" stroke="#6e6e6e" stroke-width="0.9"/><path d="M93.5 174.93 H95" stroke="#666" stroke-width="0.9"/><path d="M92.7 180.49 H95" stroke="#6e6e6e" stroke-width="0.9"/><path d="M93.5 186.04 H95" stroke="#666" stroke-width="0.9"/><path d="M92.7 191.59 H95" stroke="#6e6e6e" stroke-width="0.9"/><path d="M93.5 197.14 H95" stroke="#666" stroke-width="0.9"/><path d="M92.7 202.70 H95" stroke="#6e6e6e" stroke-width="0.9"/><path d="M93.5 208.25 H95" stroke="#666" stroke-width="0.9"/><path d="M79 213.80 H95" stroke="#6c6c6c" stroke-width="1"/><path d="M93.5 219.35 H95" stroke="#666" stroke-width="0.9"/><path d="M92.7 224.91 H95" stroke="#6e6e6e" stroke-width="0.9"/><path d="M93.5 230.46 H95" stroke="#666" stroke-width="0.9"/><path d="M92.7 236.01 H95" stroke="#6e6e6e" stroke-width="0.9"/><path d="M93.5 241.56 H95" stroke="#666" stroke-width="0.9"/><path d="M92.7 247.12 H95" stroke="#6e6e6e" stroke-width="0.9"/><path d="M93.5 252.67 H95" stroke="#666" stroke-width="0.9"/><path d="M92.7 258.22 H95" stroke="#6e6e6e" stroke-width="0.9"/><path d="M93.5 263.77 H95" stroke="#666" stroke-width="0.9"/><path d="M79 269.32 H95" stroke="#6c6c6c" stroke-width="1"/><path d="M93.5 274.88 H95" stroke="#666" stroke-width="0.9"/><path d="M92.7 280.43 H95" stroke="#6e6e6e" stroke-width="0.9"/><path d="M93.5 285.98 H95" stroke="#666" stroke-width="0.9"/><path d="M92.7 291.54 H95" stroke="#6e6e6e" stroke-width="0.9"/><path d="M93.5 297.09 H95" stroke="#666" stroke-width="0.9"/><path d="M92.7 302.64 H95" stroke="#6e6e6e" stroke-width="0.9"/><path d="M93.5 308.19 H95" stroke="#666" stroke-width="0.9"/><path d="M92.7 313.75 H95" stroke="#6e6e6e" stroke-width="0.9"/><path d="M93.5 319.30 H95" stroke="#666" stroke-width="0.9"/><path d="M79 324.85 H95" stroke="#6c6c6c" stroke-width="1"/><path d="M93.5 330.40 H95" stroke="#666" stroke-width="0.9"/><path d="M92.7 335.96 H95" stroke="#6e6e6e" stroke-width="0.9"/><path d="M93.5 341.51 H95" stroke="#666" stroke-width="0.9"/><path d="M92.7 347.06 H95" stroke="#6e6e6e" stroke-width="0.9"/><path d="M93.5 352.61 H95" stroke="#666" stroke-width="0.9"/><path d="M92.7 358.16 H95" stroke="#6e6e6e" stroke-width="0.9"/><path d="M93.5 363.72 H95" stroke="#666" stroke-width="0.9"/><path d="M92.7 369.27 H95" stroke="#6e6e6e" stroke-width="0.9"/><path d="M93.5 374.82 H95" stroke="#666" stroke-width="0.9"/><path d="M79 380.38 H95" stroke="#6c6c6c" stroke-width="1"/><path d="M93.5 385.93 H95" stroke="#666" stroke-width="0.9"/><path d="M92.7 391.48 H95" stroke="#6e6e6e" stroke-width="0.9"/><path d="M93.5 397.03 H95" stroke="#666" stroke-width="0.9"/><path d="M92.7 402.59 H95" stroke="#6e6e6e" stroke-width="0.9"/><path d="M93.5 408.14 H95" stroke="#666" stroke-width="0.9"/><path d="M92.7 413.69 H95" stroke="#6e6e6e" stroke-width="0.9"/><path d="M93.5 419.24 H95" stroke="#666" stroke-width="0.9"/><path d="M92.7 424.80 H95" stroke="#6e6e6e" stroke-width="0.9"/><path d="M93.5 430.35 H95" stroke="#666" stroke-width="0.9"/><path d="M79 435.90 H95" stroke="#6c6c6c" stroke-width="1"/><path d="M93.5 441.45 H95" stroke="#666" stroke-width="0.9"/><path d="M92.7 447.00 H95" stroke="#6e6e6e" stroke-width="0.9"/><path d="M93.5 452.56 H95" stroke="#666" stroke-width="0.9"/><path d="M92.7 458.11 H95" stroke="#6e6e6e" stroke-width="0.9"/><path d="M93.5 463.66 H95" stroke="#666" stroke-width="0.9"/><path d="M92.7 469.22 H95" stroke="#6e6e6e" stroke-width="0.9"/><path d="M93.5 474.77 H95" stroke="#666" stroke-width="0.9"/><path d="M92.7 480.32 H95" stroke="#6e6e6e" stroke-width="0.9"/><path d="M93.5 485.87 H95" stroke="#666" stroke-width="0.9"/><path d="M79 491.43 H95" stroke="#6c6c6c" stroke-width="1"/><path d="M93.5 496.98 H95" stroke="#666" stroke-width="0.9"/><path d="M92.7 502.53 H95" stroke="#6e6e6e" stroke-width="0.9"/><path d="M93.5 508.08 H95" stroke="#666" stroke-width="0.9"/><path d="M92.7 513.63 H95" stroke="#6e6e6e" stroke-width="0.9"/><path d="M93.5 519.19 H95" stroke="#666" stroke-width="0.9"/><path d="M92.7 524.74 H95" stroke="#6e6e6e" stroke-width="0.9"/><path d="M93.5 530.29 H95" stroke="#666" stroke-width="0.9"/><path d="M92.7 535.85 H95" stroke="#6e6e6e" stroke-width="0.9"/><path d="M93.5 541.40 H95" stroke="#666" stroke-width="0.9"/><path d="M79 546.95 H95" stroke="#6c6c6c" stroke-width="1"/><path d="M93.5 552.50 H95" stroke="#666" stroke-width="0.9"/><path d="M92.7 558.06 H95" stroke="#6e6e6e" stroke-width="0.9"/><path d="M93.5 563.61 H95" stroke="#666" stroke-width="0.9"/><path d="M92.7 569.16 H95" stroke="#6e6e6e" stroke-width="0.9"/><path d="M93.5 574.71 H95" stroke="#666" stroke-width="0.9"/><path d="M92.7 580.26 H95" stroke="#6e6e6e" stroke-width="0.9"/><path d="M93.5 585.82 H95" stroke="#666" stroke-width="0.9"/><path d="M92.7 591.37 H95" stroke="#6e6e6e" stroke-width="0.9"/><path d="M93.5 596.92 H95" stroke="#666" stroke-width="0.9"/><path d="M79 602.48 H95" stroke="#6c6c6c" stroke-width="1"/><path d="M93.5 608.03 H95" stroke="#666" stroke-width="0.9"/><path d="M92.7 613.58 H95" stroke="#6e6e6e" stroke-width="0.9"/><path d="M93.5 619.13 H95" stroke="#666" stroke-width="0.9"/><path d="M79 113.5 H95 M92 100 V116.5" stroke="#666" stroke-width="0.8" stroke-dasharray="1 1"/></svg>
<span class="rl" style="left:124.17px;top:105.4px">500</span>
<span class="rl" style="left:179.70px;top:105.4px">0</span>
<span class="rl" style="left:235.22px;top:105.4px">500</span>
<span class="rl" style="left:290.75px;top:105.4px">1000</span>
<span class="rl" style="left:346.27px;top:105.4px">1500</span>
<span class="rl" style="left:401.80px;top:105.4px">2000</span>
<span class="rl" style="left:457.32px;top:105.4px">2500</span>
<span class="rl" style="left:512.85px;top:105.4px">3000</span>
<span class="rl" style="left:568.38px;top:105.4px">3500</span>
<span class="rl" style="left:623.90px;top:105.4px">4000</span>
<span class="rl" style="left:679.42px;top:105.4px">4500</span>
<span class="rl v" style="left:82.4px;top:102.75px">1000</span>
<span class="rl v" style="left:82.4px;top:158.28px">500</span>
<span class="rl v" style="left:82.4px;top:213.80px">0</span>
<span class="rl v" style="left:82.4px;top:269.32px">500</span>
<span class="rl v" style="left:82.4px;top:324.85px">1000</span>
<span class="rl v" style="left:82.4px;top:380.38px">1500</span>
<span class="rl v" style="left:82.4px;top:435.90px">2000</span>
<span class="rl v" style="left:82.4px;top:491.43px">2500</span>
<span class="rl v" style="left:82.4px;top:546.95px">3000</span>
<span class="rl v" style="left:82.4px;top:602.48px">3500</span>
<div style="left:79.00px;top:100.00px;width:16.00px;height:16.50px;background:#4a4a4a;"></div>
<svg style="left:79px;top:100px" width="16" height="17" viewBox="0 0 16 17"><path d="M0 13.5 H16 M13 0 V16.5" stroke="#666" stroke-width="0.8" stroke-dasharray="1 1"/></svg>
<svg style="left:177.50px;top:213.80px" width="444.20" height="308.83" viewBox="0 0 444.20 308.83"><defs><pattern id="ck" width="10.667" height="10.667" patternUnits="userSpaceOnUse"><rect width="10.667" height="10.667" fill="#fff"/><rect x="5.333" width="5.334" height="5.333" fill="#cbcbcb"/><rect y="5.333" width="5.333" height="5.334" fill="#cbcbcb"/></pattern></defs><rect width="100%" height="100%" fill="url(#ck)"/><path d="M-0.5 308.83 V-0.5 H444.20" fill="none" stroke="#0c0c0c" stroke-width="1"/><g transform="translate(0,168.10) scale(1.5,1)"><text id="logo" x="7.49 47.76 63.42 107.55 148.72 190.10 205.98 250.30" y="0" font-family='"Liberation Sans",sans-serif' font-weight="400" font-size="57.85" fill="#050505" stroke="#050505" stroke-width="7" vector-effect="non-scaling-stroke" stroke-linejoin="miter" stroke-miterlimit="2.2">S.DESIGN</text></g></svg>
<div style="left:703.25px;top:100.00px;width:16.25px;height:519.00px;background:#4d4d4d;"></div>
<div style="left:705.50px;top:250.00px;width:11.50px;height:219.00px;background:#6b6b6b;border-radius:1.5px"></div>
<svg style="left:709.30px;top:107.30px;" width="7" height="5" viewBox="0 0 7 5"><path d="M0.7 4.3 L3.5 1.2 L6.3 4.3" fill="none" stroke="#8c8c8c" stroke-width="1.1"/></svg>
<svg style="left:709.00px;top:607.30px;" width="7" height="5" viewBox="0 0 7 5"><path d="M0.7 0.7 L3.5 3.8 L6.3 0.7" fill="none" stroke="#8c8c8c" stroke-width="1.1"/></svg>
<div style="left:79.00px;top:619.00px;width:640.50px;height:16.00px;background:#535353;"></div>
<div style="left:79.00px;top:619.00px;width:47.50px;height:16.00px;background:#434343;"></div>
<span class="t" id="t2" style="left:82.00px;top:619.30px;font-size:12px;line-height:18px;color:#ffffff;font-weight:400;transform:scaleX(1.0073);">16.67%</span>
<span class="t" id="t3" style="left:143.75px;top:619.90px;font-size:11.5px;line-height:17px;color:#e2e2e2;font-weight:400;transform:scaleX(0.9577);">4000 px x 2781 px (300 ppi)</span>
<svg style="left:299.60px;top:624.00px;" width="5.4" height="9.4" viewBox="0 0 5.4 9.4"><path d="M1 0.8 L4.2 4.7 L1 8.6" fill="none" stroke="#c4c4c4" stroke-width="1"/></svg>
<div style="left:309.50px;top:619.00px;width:393.75px;height:16.00px;background:#4d4d4d;"></div>
<svg style="left:318.00px;top:624.80px;" width="5" height="8" viewBox="0 0 5 8"><path d="M4 0.8 L1 4 L4 7.2" fill="none" stroke="#7d7d7d" stroke-width="1.1"/></svg>
<svg style="left:691.00px;top:625.00px;" width="5" height="8" viewBox="0 0 5 8"><path d="M1 0.8 L4 4 L1 7.2" fill="none" stroke="#8d8d8d" stroke-width="1.1"/></svg>
<div style="left:432.00px;top:622.00px;width:149.25px;height:11.50px;background:#6b6b6b;border-radius:2px"></div>
<div style="left:719.50px;top:70.50px;width:2.30px;height:569.50px;background:#474747;"></div>
<div style="left:721.60px;top:70.50px;width:1.00px;height:569.50px;background:#3a3a3a;"></div>
<div style="left:722.50px;top:70.50px;width:302.50px;height:12.50px;background:#404040;"></div>
<div style="left:722.50px;top:83.00px;width:302.50px;height:27.40px;background:#424242;"></div>
<div style="left:722.50px;top:83.00px;width:49.25px;height:27.50px;background:#535353;"></div>
<div style="left:771.75px;top:83.00px;width:1.00px;height:27.00px;background:#3c3c3c;"></div>
<span class="t" id="t35" style="left:732.50px;top:87.25px;font-size:11.5px;line-height:17px;color:#f0f0f0;font-weight:500;transform:scaleX(0.6845);">レイヤー</span>
<div style="left:727.00px;top:121.00px;width:116.75px;height:17.75px;background:#454545;border-radius:2px"></div>
<svg style="left:734.80px;top:125.20px;" width="10.6" height="10.6" viewBox="0 0 12 12"><circle cx="4.8" cy="4.8" r="3.4" fill="none" stroke="#e6e6e6" stroke-width="1.7"/><path d="M7.4 7.4 L10.8 10.8" stroke="#e6e6e6" stroke-width="2" stroke-linecap="round"/></svg>
<span class="t" id="t36" style="left:748.75px;top:121.50px;font-size:11.5px;line-height:17px;color:#e2e2e2;font-weight:400;transform:scaleX(1.0109);">種類</span>
<svg style="left:833.25px;top:128.40px;" width="8.5" height="5.2" viewBox="0 0 8.5 5.2"><path d="M1 1 L4.25 4.20 L7.50 1" fill="none" stroke="#b4b4b4" stroke-width="1.0"/></svg>
<svg style="left:865.50px;top:123.60px;" width="12.4" height="10.7" viewBox="0 0 14 12"><rect x="0.7" y="0.7" width="12.6" height="10.6" rx="1" fill="none" stroke="#dedede" stroke-width="1.4"/><path d="M2.6 9.4 L5.2 5.4 L7 7.8 L8.6 6.2 L11.2 9.4 Z" fill="#dedede"/></svg>
<svg style="left:889.20px;top:123.20px;" width="11.6" height="11.6" viewBox="0 0 13 13"><circle cx="6.5" cy="6.5" r="5.6" fill="none" stroke="#dedede" stroke-width="1.4"/><path d="M10.6 2.6 A5.6 5.6 0 0 1 2.6 10.6 Z" fill="#dedede"/></svg>
<svg style="left:913.40px;top:123.20px;" width="11.2" height="11.8" viewBox="0 0 13 13"><path d="M0.8 0.8 L12.2 0.8 L12.2 4 L11 4 L10.6 2.6 L7.6 2.6 L7.6 10.8 L9.4 11.1 L9.4 12.2 L3.6 12.2 L3.6 11.1 L5.4 10.8 L5.4 2.6 L2.4 2.6 L2 4 L0.8 4 Z" fill="#dedede"/></svg>
<svg style="left:937.00px;top:123.00px;" width="12.2" height="12.2" viewBox="0 0 14 14"><rect x="2.4" y="2.4" width="9.2" height="9.2" fill="none" stroke="#dedede" stroke-width="1.3"/><rect x="0.6" y="0.6" width="3.4" height="3.4" fill="#535353" stroke="#dedede" stroke-width="1"/><rect x="10" y="0.6" width="3.4" height="3.4" fill="#535353" stroke="#dedede" stroke-width="1"/><rect x="0.6" y="10" width="3.4" height="3.4" fill="#535353" stroke="#dedede" stroke-width="1"/><rect x="10" y="10" width="3.4" height="3.4" fill="#535353" stroke="#dedede" stroke-width="1"/></svg>
<svg style="left:962.40px;top:122.80px;" width="11.4" height="12.4" viewBox="0 0 13 14"><path d="M3.6 0.8 L8.6 0.8 L12 4.2 L12 11 L3.6 11 Z" fill="none" stroke="#dedede" stroke-width="1.3"/><path d="M8.2 0.8 L8.2 4.6 L12 4.6" fill="none" stroke="#dedede" stroke-width="1.1"/><rect x="0.8" y="6" width="6.4" height="7.4" fill="#dedede"/></svg>
<div style="left:995.20px;top:124.00px;width:7.80px;height:14.60px;background:#454545;border-radius:4px"></div>
<div style="left:995.00px;top:121.20px;width:8.20px;height:8.20px;background:#dcdcdc;border-radius:4.2px"></div>
<div style="left:722.50px;top:142.00px;width:302.50px;height:1.20px;background:#474747;"></div>
<div style="left:727.00px;top:150.20px;width:153.50px;height:17.80px;background:#454545;border-radius:2px"></div>
<span class="t" id="t37" style="left:735.00px;top:151.00px;font-size:11.5px;line-height:17px;color:#e2e2e2;font-weight:400;transform:scaleX(1.0000);">通常</span>
<svg style="left:869.75px;top:157.90px;" width="8.5" height="5.2" viewBox="0 0 8.5 5.2"><path d="M1 1 L4.25 4.20 L7.50 1" fill="none" stroke="#b4b4b4" stroke-width="1.0"/></svg>
<span class="t" id="t38" style="left:888.50px;top:150.00px;font-size:11.5px;line-height:17px;color:#cdcdcd;font-weight:400;transform:scaleX(1.0403);">不透明度 :</span>
<div style="left:949.50px;top:150.50px;width:38.25px;height:16.00px;background:#454545;border-radius:2px 0 0 2px;box-shadow:inset 0 0 0 0.8px #5c5c5c"></div>
<div style="left:987.75px;top:150.50px;width:13.75px;height:16.00px;background:#464646;border-radius:0 2px 2px 0;box-shadow:inset 0 0 0 0.8px #5c5c5c"></div>
<span class="t" id="t39" style="left:952.25px;top:150.20px;font-size:11.5px;line-height:17px;color:#f0f0f0;font-weight:400;transform:scaleX(0.9347);">100%</span>
<svg style="left:991.00px;top:157.00px;" width="8" height="5" viewBox="0 0 8 5"><path d="M1 1 L4.00 4.00 L7.00 1" fill="none" stroke="#b4b4b4" stroke-width="1.0"/></svg>
<div style="left:722.50px;top:171.50px;width:302.50px;height:1.20px;background:#474747;"></div>
<span class="t" id="t40" style="left:728.75px;top:178.50px;font-size:11.5px;line-height:17px;color:#d0d0d0;font-weight:400;transform:scaleX(0.7642);">ロック :</span>
<svg style="left:770.00px;top:181.30px;" width="11.5" height="11.5" viewBox="0 0 11.5 11.5"><rect x="0" y="0" width="11.5" height="11.5" fill="#6e6e6e"/><rect x="0.20" y="0.20" width="3.7" height="3.7" fill="#b4b4b4"/><rect x="0.20" y="7.60" width="3.7" height="3.7" fill="#b4b4b4"/><rect x="3.90" y="3.90" width="3.7" height="3.7" fill="#b4b4b4"/><rect x="7.60" y="0.20" width="3.7" height="3.7" fill="#b4b4b4"/><rect x="7.60" y="7.60" width="3.7" height="3.7" fill="#b4b4b4"/><rect x="0.3" y="0.3" width="10.9" height="10.9" fill="none" stroke="#8a8a8a" stroke-width="0.6"/></svg>
<svg style="left:791.50px;top:179.50px;" width="15" height="15" viewBox="0 0 15 15"><path d="M13.6 1 C12.9 0.5 12.1 1 11.5 1.8 L6.2 8.6 L8 10 L13.4 3.4 C14 2.6 14.2 1.5 13.6 1 Z M5.6 9.2 C4.1 9 3.1 10 3 11.3 C2.9 12.3 2.3 13 1.5 13.3 C3.3 14.3 6.1 14 7.2 12.4 C7.9 11.4 7.6 10.3 7.2 10 Z" fill="#9c9c9c"/></svg>
<svg style="left:812.00px;top:180.00px;" width="14" height="14" viewBox="0 0 14 14"><path d="M7 0.4 L9.2 3.2 L7.7 3.2 L7.7 6.3 L10.8 6.3 L10.8 4.8 L13.6 7 L10.8 9.2 L10.8 7.7 L7.7 7.7 L7.7 10.8 L9.2 10.8 L7 13.6 L4.8 10.8 L6.3 10.8 L6.3 7.7 L3.2 7.7 L3.2 9.2 L0.4 7 L3.2 4.8 L3.2 6.3 L6.3 6.3 L6.3 3.2 L4.8 3.2 Z" fill="#dedede"/></svg>
<svg style="left:834.50px;top:181.00px;" width="13.5" height="12" viewBox="0 0 15 14"><path d="M3.6 0.4 L3.6 10.4 L14.6 10.4 M0.4 3.4 L11.4 3.4 L11.4 13.6" fill="none" stroke="#dedede" stroke-width="1.4"/><path d="M9 1 L13.6 1 M12.6 0 L14 1 L12.6 2" stroke="#dedede" stroke-width="0.9" fill="none"/></svg>
<svg style="left:858.50px;top:180.50px;" width="10.5" height="12.6" viewBox="0 0 11 14"><path d="M2.8 6.4 L2.8 4.2 C2.8 0.6 8.2 0.6 8.2 4.2 L8.2 6.4" fill="none" stroke="#e6e6e6" stroke-width="1.5"/><rect x="0.6" y="6" width="9.8" height="7.4" rx="0.8" fill="#e6e6e6"/><rect x="4.9" y="8.4" width="1.3" height="2.6" fill="#535353"/></svg>
<span class="t" id="t41" style="left:916.00px;top:178.50px;font-size:11.5px;line-height:17px;color:#cdcdcd;font-weight:400;transform:scaleX(0.9187);">塗り :</span>
<div style="left:949.50px;top:178.75px;width:38.25px;height:16.25px;background:#454545;border-radius:2px 0 0 2px;box-shadow:inset 0 0 0 0.8px #5c5c5c"></div>
<div style="left:987.75px;top:178.75px;width:13.75px;height:16.25px;background:#464646;border-radius:0 2px 2px 0;box-shadow:inset 0 0 0 0.8px #5c5c5c"></div>
<span class="t" id="t42" style="left:952.25px;top:178.50px;font-size:11.5px;line-height:17px;color:#f0f0f0;font-weight:400;transform:scaleX(0.9347);">100%</span>
<svg style="left:991.00px;top:185.50px;" width="8" height="5" viewBox="0 0 8 5"><path d="M1 1 L4.00 4.00 L7.00 1" fill="none" stroke="#b4b4b4" stroke-width="1.0"/></svg>
<div style="left:722.50px;top:203.75px;width:302.50px;height:355.75px;background:#535353;"></div>
<div style="left:722.50px;top:559.50px;width:302.50px;height:51.00px;background:#4c4c4c;"></div>
<div style="left:722.50px;top:559.00px;width:302.50px;height:1.20px;background:#494949;"></div>
<div style="left:722.50px;top:203.75px;width:29.50px;height:23.75px;background:#c23f3f;"></div>
<svg style="left:731.00px;top:211.50px;" width="14" height="10" viewBox="0 0 14 10"><path d="M0.4 5 C3 0.2 11 0.2 13.6 5 C11 9.8 3 9.8 0.4 5 Z" fill="#ffffff"/><circle cx="7" cy="5" r="2.9" fill="#c23f3f"/><circle cx="7" cy="5" r="1.5" fill="#ffffff" opacity="0.9"/></svg>
<svg style="left:756.25px;top:212.80px;" width="9" height="5.4" viewBox="0 0 9 5.4"><path d="M1 1 L4.50 4.40 L8.00 1" fill="none" stroke="#9c9c9c" stroke-width="1.0"/></svg>
<svg style="left:768.50px;top:209.50px;" width="15" height="12" viewBox="0 0 15 12"><path d="M0.6 0.8 L5.6 0.8 L7 2.6 L14.4 2.6 L14.4 11.4 L0.6 11.4 Z" fill="#dcdcdc"/><path d="M0.6 4.2 L14.4 4.2" stroke="#535353" stroke-width="0.9"/></svg>
<span class="t" id="t43" style="left:795.50px;top:208.50px;font-size:11.5px;line-height:17px;color:#ececec;font-weight:400;transform:scaleX(0.8544);">[YOUR LOGO HERE]</span>
<div style="left:752.00px;top:227.50px;width:273.00px;height:65.50px;background:#6b6b6b;"></div>
<div style="left:722.50px;top:227.50px;width:29.50px;height:65.50px;background:#505050;"></div>
<svg style="left:731.00px;top:257.00px;" width="14" height="10" viewBox="0 0 14 10"><path d="M0.4 5 C3 0.2 11 0.2 13.6 5 C11 9.8 3 9.8 0.4 5 Z" fill="#ececec"/><circle cx="7" cy="5" r="2.9" fill="#505050"/><circle cx="7" cy="5" r="1.5" fill="#ececec" opacity="0.9"/></svg>
<div style="left:755.80px;top:232.00px;width:81.70px;height:58.00px;background:#5f5f5f;box-shadow:0 0 0 1.3px #d2d2d2"></div>
<svg style="left:790.50px;top:254.50px;" width="13" height="14" viewBox="0 0 13 14"><path d="M0.8 0.8 L12.2 0.8 L12.2 4.2 L11.2 4.2 L10.8 2.4 L7.4 2.4 L7.4 11.8 L9.4 12.2 L9.4 13.2 L3.6 13.2 L3.6 12.2 L5.6 11.8 L5.6 2.4 L2.2 2.4 L1.8 4.2 L0.8 4.2 Z" fill="#e4e4e4"/></svg>
<span class="t" id="t44" style="left:845.75px;top:253.00px;font-size:11.5px;line-height:17px;color:#f2f2f2;font-weight:400;transform:scaleX(0.8505);">S.DESIGN</span>
<div style="left:722.50px;top:292.50px;width:302.50px;height:1.10px;background:#484848;"></div>
<div style="left:722.50px;top:381.25px;width:302.50px;height:1.10px;background:#484848;"></div>
<div style="left:722.50px;top:470.75px;width:302.50px;height:1.10px;background:#484848;"></div>
<div style="left:751.60px;top:227.50px;width:1.00px;height:332.00px;background:#494949;"></div>
<div style="left:732.00px;top:332.00px;width:11.75px;height:13.00px;background:transparent;box-shadow:inset 0 0 0 1px #5b5b5b"></div>
<div style="left:732.00px;top:420.50px;width:11.75px;height:13.00px;background:transparent;box-shadow:inset 0 0 0 1px #5b5b5b"></div>
<div style="left:732.00px;top:509.00px;width:11.75px;height:13.00px;background:transparent;box-shadow:inset 0 0 0 1px #5b5b5b"></div>
<svg style="left:757.40px;top:319.80px;overflow:hidden" width="78.90" height="37.80" viewBox="0 0 78.90 37.80"><defs><pattern id="ckt1" width="5" height="5" patternUnits="userSpaceOnUse"><rect width="5" height="5" fill="#fff"/><rect x="2.5" width="2.5" height="2.5" fill="#cfcfcf"/><rect y="2.5" width="2.5" height="2.5" fill="#cfcfcf"/></pattern></defs><rect width="100%" height="100%" fill="url(#ckt1)"/><g fill="#000" stroke="#000" stroke-width="0.5"><path d="M42.2 6.4 C43.6 4 42 1.4 39.4 1.7 C35.8 2.1 34.8 6 36.4 8.5 C38.4 11.6 44 11.3 50 11.3 L67 11.3 C75 11.3 77.6 15 76.6 18.6 C75.9 21.4 74.2 23.4 72.6 24.6" fill="none" stroke="#000" stroke-width="1.7" stroke-linecap="round"/><path d="M42.2 6.4 C43.6 4 42 1.4 39.4 1.7 C35.8 2.1 34.8 6 36.4 8.5 C38.4 11.6 44 11.3 50 11.3 L67 11.3 C75 11.3 77.6 15 76.6 18.6 C75.9 21.4 74.2 23.4 72.6 24.6" fill="none" stroke="#000" stroke-width="1.7" stroke-linecap="round" transform="rotate(180 39.45 18.9)"/><text x="4.6" y="10.6" font-size="8.6" textLength="26.4" lengthAdjust="spacingAndGlyphs" font-family='"Liberation Serif",serif' font-weight="700">WOOD</text><text x="9.4" y="25" font-size="17.6" textLength="60" lengthAdjust="spacingAndGlyphs" font-family='"Liberation Serif",serif' font-weight="700">CARVED</text><text x="40.6" y="33.8" font-size="8.4" textLength="34.4" lengthAdjust="spacingAndGlyphs" font-family='"Liberation Serif",serif' font-weight="700">MOCKUP</text></g><circle cx="50" cy="6.6" r="0.95" fill="#000"/><circle cx="54.6" cy="6.6" r="0.95" fill="#000"/><circle cx="59.2" cy="6.6" r="0.95" fill="#000"/><circle cx="16.1" cy="32.9" r="0.95" fill="#000"/><circle cx="20.5" cy="32.9" r="0.95" fill="#000"/><circle cx="24.9" cy="32.9" r="0.95" fill="#000"/><rect x="0.3" y="0.3" width="78.9" height="37.2" fill="none" stroke="#3a3a3a" stroke-width="0.7"/></svg>
<svg style="left:757.40px;top:407.70px;overflow:hidden" width="78.90" height="39.10" viewBox="0 0 78.90 39.10"><defs><pattern id="ckt2" width="5" height="5" patternUnits="userSpaceOnUse"><rect width="5" height="5" fill="#fff"/><rect x="2.5" width="2.5" height="2.5" fill="#cfcfcf"/><rect y="2.5" width="2.5" height="2.5" fill="#cfcfcf"/></pattern></defs><rect width="100%" height="100%" fill="url(#ckt2)"/><g transform="translate(0,0.6)"><g fill="#000" stroke="#000" stroke-width="6.4" stroke-linejoin="round"><path d="M42.2 6.4 C43.6 4 42 1.4 39.4 1.7 C35.8 2.1 34.8 6 36.4 8.5 C38.4 11.6 44 11.3 50 11.3 L67 11.3 C75 11.3 77.6 15 76.6 18.6 C75.9 21.4 74.2 23.4 72.6 24.6" fill="none" stroke="#000" stroke-width="7.5" stroke-linecap="round"/><path d="M42.2 6.4 C43.6 4 42 1.4 39.4 1.7 C35.8 2.1 34.8 6 36.4 8.5 C38.4 11.6 44 11.3 50 11.3 L67 11.3 C75 11.3 77.6 15 76.6 18.6 C75.9 21.4 74.2 23.4 72.6 24.6" fill="none" stroke="#000" stroke-width="7.5" stroke-linecap="round" transform="rotate(180 39.45 18.9)"/><text x="4.6" y="10.6" font-size="8.6" textLength="26.4" lengthAdjust="spacingAndGlyphs" font-family='"Liberation Serif",serif' font-weight="700">WOOD</text><text x="9.4" y="25" font-size="17.6" textLength="60" lengthAdjust="spacingAndGlyphs" font-family='"Liberation Serif",serif' font-weight="700">CARVED</text><text x="40.6" y="33.8" font-size="8.4" textLength="34.4" lengthAdjust="spacingAndGlyphs" font-family='"Liberation Serif",serif' font-weight="700">MOCKUP</text></g><g fill="#fff" stroke="#fff" stroke-width="0.3"><path d="M42.2 6.4 C43.6 4 42 1.4 39.4 1.7 C35.8 2.1 34.8 6 36.4 8.5 C38.4 11.6 44 11.3 50 11.3 L67 11.3 C75 11.3 77.6 15 76.6 18.6 C75.9 21.4 74.2 23.4 72.6 24.6" fill="none" stroke="#fff" stroke-width="1.5" stroke-linecap="round"/><path d="M42.2 6.4 C43.6 4 42 1.4 39.4 1.7 C35.8 2.1 34.8 6 36.4 8.5 C38.4 11.6 44 11.3 50 11.3 L67 11.3 C75 11.3 77.6 15 76.6 18.6 C75.9 21.4 74.2 23.4 72.6 24.6" fill="none" stroke="#fff" stroke-width="1.5" stroke-linecap="round" transform="rotate(180 39.45 18.9)"/><text x="4.6" y="10.6" font-size="8.6" textLength="26.4" lengthAdjust="spacingAndGlyphs" font-family='"Liberation Serif",serif' font-weight="700">WOOD</text><text x="9.4" y="25" font-size="17.6" textLength="60" lengthAdjust="spacingAndGlyphs" font-family='"Liberation Serif",serif' font-weight="700">CARVED</text><text x="40.6" y="33.8" font-size="8.4" textLength="34.4" lengthAdjust="spacingAndGlyphs" font-family='"Liberation Serif",serif' font-weight="700">MOCKUP</text></g><circle cx="50" cy="6.6" r="0.95" fill="#000"/><circle cx="54.6" cy="6.6" r="0.95" fill="#000"/><circle cx="59.2" cy="6.6" r="0.95" fill="#000"/><circle cx="16.1" cy="32.9" r="0.95" fill="#000"/><circle cx="20.5" cy="32.9" r="0.95" fill="#000"/><circle cx="24.9" cy="32.9" r="0.95" fill="#000"/></g><rect x="0.3" y="0.3" width="78.9" height="38.5" fill="none" stroke="#3a3a3a" stroke-width="0.7"/></svg>
<svg style="left:757.40px;top:495.30px;overflow:hidden" width="78.90" height="42.50" viewBox="0 0 78.90 42.50"><defs><pattern id="ckt3" width="5" height="5" patternUnits="userSpaceOnUse"><rect width="5" height="5" fill="#fff"/><rect x="2.5" width="2.5" height="2.5" fill="#cfcfcf"/><rect y="2.5" width="2.5" height="2.5" fill="#cfcfcf"/></pattern></defs><rect width="100%" height="100%" fill="url(#ckt3)"/><g fill="#000" stroke="#000" stroke-width="6.6" stroke-linejoin="round"><path d="M41.4 6.6 C42.6 3.6 40 1.2 37.4 2.2 C34 3.6 33.6 8 36.4 9.8 C40 12 52 8.4 62 6.6 C70 5.2 74.6 7 75.4 11 C76 14 75 16.4 73.6 18" fill="none" stroke="#000" stroke-width="7.6" stroke-linecap="round"/><path d="M6.4 27.6 C3.4 30.6 5 35.6 10 35.6 C16 35.6 22 32.4 29 31.4 C34 30.8 39.6 32 39.4 35.4 C39.2 38.4 35 38.6 34.6 36" fill="none" stroke="#000" stroke-width="7.6" stroke-linecap="round"/><text x="3.2" y="18.6" font-size="9.6" textLength="27" lengthAdjust="spacingAndGlyphs" transform="rotate(-15 3.2 18.6)" font-family='"Liberation Serif",serif' font-weight="700" font-style="italic">Carved</text><text x="10.4" y="33.4" font-size="19" textLength="62" lengthAdjust="spacingAndGlyphs" transform="rotate(-14 10.4 33.4)" font-family='"Liberation Serif",serif' font-weight="700" font-style="italic">Mockup</text><text x="45.4" y="36.2" font-size="9.6" textLength="24.6" lengthAdjust="spacingAndGlyphs" transform="rotate(-14 45.4 36.2)" font-family='"Liberation Serif",serif' font-weight="700" font-style="italic">Wood</text></g><g fill="#fff" stroke="#fff" stroke-width="0.3"><path d="M41.4 6.6 C42.6 3.6 40 1.2 37.4 2.2 C34 3.6 33.6 8 36.4 9.8 C40 12 52 8.4 62 6.6 C70 5.2 74.6 7 75.4 11 C76 14 75 16.4 73.6 18" fill="none" stroke="#fff" stroke-width="1.6" stroke-linecap="round"/><path d="M6.4 27.6 C3.4 30.6 5 35.6 10 35.6 C16 35.6 22 32.4 29 31.4 C34 30.8 39.6 32 39.4 35.4 C39.2 38.4 35 38.6 34.6 36" fill="none" stroke="#fff" stroke-width="1.6" stroke-linecap="round"/><text x="3.2" y="18.6" font-size="9.6" textLength="27" lengthAdjust="spacingAndGlyphs" transform="rotate(-15 3.2 18.6)" font-family='"Liberation Serif",serif' font-weight="700" font-style="italic">Carved</text><text x="10.4" y="33.4" font-size="19" textLength="62" lengthAdjust="spacingAndGlyphs" transform="rotate(-14 10.4 33.4)" font-family='"Liberation Serif",serif' font-weight="700" font-style="italic">Mockup</text><text x="45.4" y="36.2" font-size="9.6" textLength="24.6" lengthAdjust="spacingAndGlyphs" transform="rotate(-14 45.4 36.2)" font-family='"Liberation Serif",serif' font-weight="700" font-style="italic">Wood</text></g><rect x="0.3" y="0.3" width="78.9" height="41.9" fill="none" stroke="#3a3a3a" stroke-width="0.7"/></svg>
<span class="t" id="t45" style="left:845.75px;top:331.00px;font-size:11.5px;line-height:17px;color:#e4e4e4;font-weight:400;transform:scaleX(0.8771);">Example</span>
<span class="t" id="t46" style="left:845.75px;top:419.50px;font-size:11.5px;line-height:17px;color:#e4e4e4;font-weight:400;transform:scaleX(0.8771);">Example</span>
<span class="t" id="t47" style="left:845.75px;top:507.75px;font-size:11.5px;line-height:17px;color:#e4e4e4;font-weight:400;transform:scaleX(0.8771);">Example</span>
<div style="left:722.50px;top:610.00px;width:302.50px;height:1.20px;background:#3e3e3e;"></div>
<div style="left:722.50px;top:611.20px;width:302.50px;height:23.80px;background:#535353;"></div>
<svg style="left:844.00px;top:618.50px;" width="15" height="8" viewBox="0 0 15 8"><rect x="0.8" y="0.8" width="7.4" height="6.4" rx="3.2" fill="none" stroke="#8a8a8a" stroke-width="1.5"/><rect x="6.8" y="0.8" width="7.4" height="6.4" rx="3.2" fill="none" stroke="#8a8a8a" stroke-width="1.5"/><path d="M4.6 4 H10.4" stroke="#8a8a8a" stroke-width="1.5"/></svg>
<span class="t" id="t48" style="left:873.00px;top:611.50px;font-size:13px;line-height:20px;color:#e4e4e4;font-weight:400;transform:scaleX(1.1852);font-style:italic;">fx</span>
<svg style="left:884.00px;top:626.50px;" width="4" height="3" viewBox="0 0 4 3"><path d="M0 0 L4 0 L2 3 Z" fill="#d8d8d8"/></svg>
<svg style="left:899.00px;top:617.00px;" width="14" height="11" viewBox="0 0 14 11"><rect x="0.4" y="0.4" width="13.2" height="10.2" rx="1" fill="#d8d8d8"/><circle cx="7" cy="5.5" r="3" fill="#535353"/></svg>
<svg style="left:927.50px;top:616.50px;" width="13" height="13" viewBox="0 0 13 13"><circle cx="6.5" cy="6.5" r="5.4" fill="none" stroke="#d8d8d8" stroke-width="1.4"/><path d="M10.4 2.6 A5.4 5.4 0 0 1 2.6 10.4 Z" fill="#d8d8d8"/></svg>
<svg style="left:938.50px;top:627.00px;" width="4" height="3" viewBox="0 0 4 3"><path d="M0 0 L4 0 L2 3 Z" fill="#d8d8d8"/></svg>
<svg style="left:952.50px;top:616.50px;" width="14" height="12" viewBox="0 0 14 12"><path d="M0.5 0.8 L5.4 0.8 L6.8 2.6 L13.5 2.6 L13.5 11.2 L0.5 11.2 Z" fill="#d8d8d8"/></svg>
<svg style="left:981.00px;top:616.50px;" width="12" height="12" viewBox="0 0 12 12"><rect x="0.8" y="0.8" width="10.4" height="10.4" rx="1" fill="none" stroke="#d8d8d8" stroke-width="1.5"/><path d="M6 3.4 V8.6 M3.4 6 H8.6" stroke="#d8d8d8" stroke-width="1.5"/></svg>
<svg style="left:1007.50px;top:615.50px;" width="12" height="14" viewBox="0 0 12 14"><path d="M0.6 2.8 H11.4 M4 2.6 V0.8 H8 V2.6" fill="none" stroke="#d8d8d8" stroke-width="1.3"/><path d="M1.8 4.2 L2.4 13.2 L9.6 13.2 L10.2 4.2 Z" fill="none" stroke="#d8d8d8" stroke-width="1.3"/><path d="M4.4 5.6 V11.6 M6 5.6 V11.6 M7.6 5.6 V11.6" stroke="#d8d8d8" stroke-width="0.9"/></svg>

<div style="left:0;top:0;width:1025px;height:2.4px;background:linear-gradient(#cdcdcd 0,#c0c0c0 50%,#444 70%,#4a4a4a 100%)"></div>
<div style="left:0;top:0;width:4.6px;height:640px;background:linear-gradient(90deg,#a8a8a8 0,#a8a8a8 1.2px,#4e4e4e 1.6px,#4f4f4f 3.8px,#404040 4.6px)"></div>
<div style="left:0;top:0px;width:4.6px;height:34px;background:linear-gradient(90deg,#a8a8a8 0,#a8a8a8 1.2px,#4e4e4e 1.6px,#515151 4.6px)"></div>
<div style="left:0;top:12px;width:1.6px;height:34px;background:#3c3c3c"></div>
<div style="left:0;top:635px;width:1025px;height:5px;background:linear-gradient(#3a3a3a 0,#444 1.2px,#464646 3.6px,#9a9a9a 4.2px)"></div>
<svg style="left:0;top:0" width="12" height="14" viewBox="0 0 12 14"><path d="M0 0 H9 V2.2 H7.4 C4.4 2.2 2.2 4.4 2.2 7.4 V13 H0 Z" fill="#444"/><path d="M0 0 H9 V1.4 H7 C3.8 1.4 1.5 3.8 1.5 7 V12.5 H0 Z" fill="#d2d2d2"/></svg>
<svg style="left:0;top:628px" width="12" height="12" viewBox="0 0 12 12"><path d="M0 12 H12 V10.6 H8.5 C4.5 10.6 1.6 7.5 1.6 3.5 V0 H0 Z" fill="#9c9c9c"/></svg>

<div style="left:356.00px;top:71.20px;width:322.00px;height:26.40px;background:#535353;"></div>
<span class="t" id="t49" style="left:366.60px;top:76.40px;font-size:11.5px;line-height:17px;color:#e8e8e8;font-weight:400;transform:scaleX(0.9499);">[YOUR LOGO HERE]11.psb @ 16.7% (S.DESIGN, RGB/8)</span>
<svg style="left:661.00px;top:82.00px;" width="7" height="7" viewBox="0 0 7 7"><path d="M0.8 0.8 L6.2 6.2 M6.2 0.8 L0.8 6.2" stroke="#c8c8c8" stroke-width="1.1"/></svg>
<div style="left:345.25px;top:60px;width:343.95px;height:48.9px;box-sizing:border-box;border:2.8px solid #fff;border-radius:3.5px;filter:drop-shadow(0 0 2px rgba(0,0,0,.55))"></div>
<div style="left:348px;top:62.8px;width:338px;height:43px;box-sizing:border-box;border:5.1px solid #36bdae;"></div>
<div style="left:353px;top:67.9px;width:328px;height:33.1px;box-sizing:border-box;border:3.2px solid #fff;"></div>
<svg style="left:0;top:0;filter:drop-shadow(0 0 2px rgba(0,0,0,.6))" width="720" height="70" viewBox="0 0 720 70"><text x="361.80 376.10 390.30 402.55 425.05 445.15 463.75 483.95 505.90 528.45 548.70 567.05 589.05 610.55 632.05 651.85" y="51.5" font-family='"Liberation Sans","Noto Sans CJK JP",sans-serif' font-weight="700" font-size="19.5" fill="#36bdae" stroke="#fff" stroke-width="5.6" stroke-linejoin="round" paint-order="stroke">PSBが開くので編集&amp;上書き保存</text></svg>
</div></body></html>
